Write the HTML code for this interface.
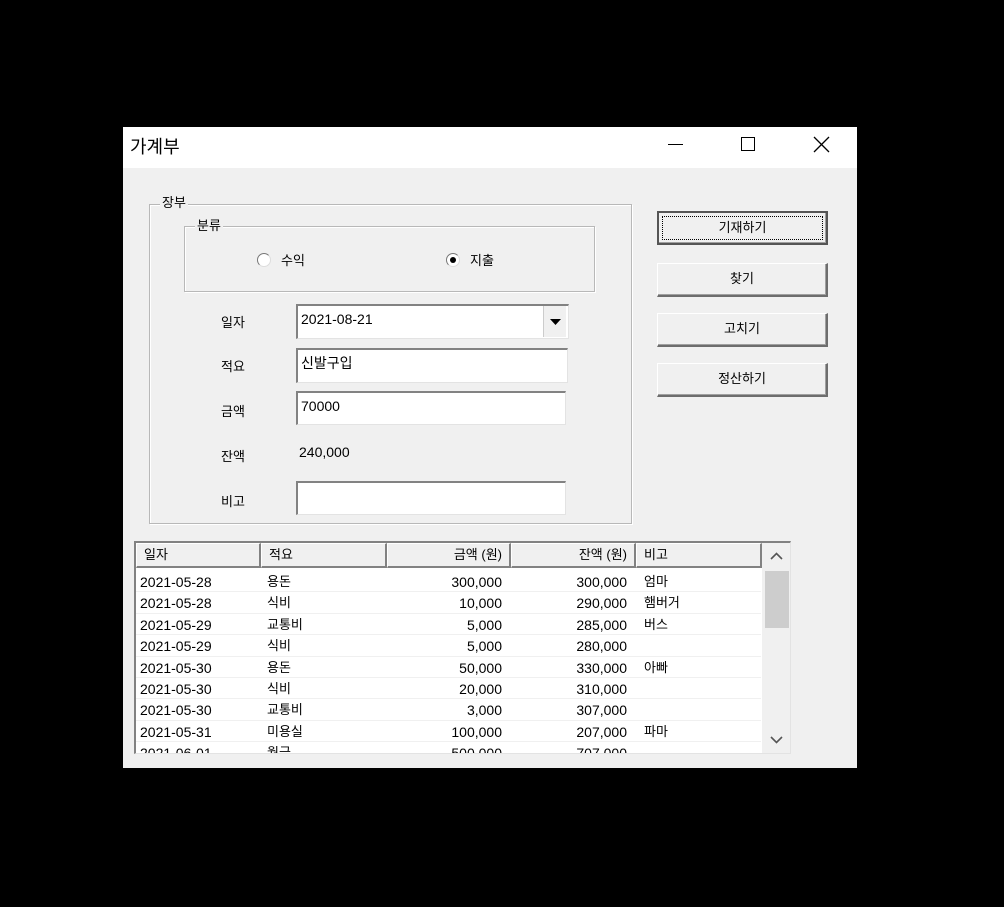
<!DOCTYPE html>
<html><head><meta charset="utf-8"><style>
*{margin:0;padding:0;box-sizing:border-box}
body{width:1004px;height:907px;background:#000;position:relative;overflow:hidden;font-family:"Liberation Sans","Noto Sans CJK KR",sans-serif;font-size:14px;color:#000}
.a{position:absolute}
#win{left:123px;top:127px;width:734px;height:641px;background:#f0f0f0}
#title{left:0;top:0;width:734px;height:41px;background:#fff}
.gb{position:absolute;border:1px solid #b8b8b8;box-shadow:inset 1px 1px 0 #fff,1px 1px 0 #fff}
.gl{position:absolute;background:#f0f0f0;padding:0 2px;font-size:13px;line-height:16px}
.in{position:absolute;background:#fff;border-top:2px solid #828282;border-left:2px solid #828282;border-right:1px solid #e3e3e3;border-bottom:1px solid #e3e3e3;padding:5px 0 0 3px;font-size:14px;line-height:16px}
.lb{position:absolute;font-size:13px}
.btn{position:absolute;left:534px;width:171px;height:34px;background:#f0f0f0;border:1px solid #fff;border-right:2px solid #6d6d6d;border-bottom:2px solid #6d6d6d;box-shadow:inset -1px -1px 0 #a0a0a0;text-align:center;line-height:30px;font-size:13px}
.rd{position:absolute;width:14px;height:14px;border-radius:50%;background:#fff;border:1px solid #777;border-right-color:#ddd;border-bottom-color:#ddd}
#list{left:11px;top:414px;width:657px;height:213px;background:#fff;border-top:2px solid #828282;border-left:2px solid #828282;border-right:1px solid #e3e3e3;border-bottom:1px solid #e3e3e3;overflow:hidden}
.hd{position:absolute;top:0;height:25px;background:#f0f0f0;border-right:2px solid #828282;border-bottom:2px solid #828282;border-top:1px solid #fff;border-left:1px solid #fff;font-size:13px;line-height:22px;padding:0 7px}
.row{position:absolute;left:0;height:21.4px;width:625px;font-size:14px;line-height:22px;border-bottom:1px solid #f0f0f0}
.row span{position:absolute;top:0}
.c1{left:4px}.c2{left:131px;font-size:13px}.c3{right:259px}.c4{right:134px}.c5{left:508px;font-size:13px}
</style></head><body>
<div id="win" class="a">
 <div id="title" class="a"><span class="a" style="left:7px;top:6px;font-size:18px">가계부</span>
  <div class="a" style="left:545px;top:17px;width:15px;height:1px;background:#000"></div>
  <div class="a" style="left:618px;top:10px;width:14px;height:14px;border:1px solid #000"></div>
  <svg class="a" style="left:690px;top:9px" width="17" height="17"><path d="M1 1L16 16M16 1L1 16" stroke="#000" stroke-width="1.3"/></svg>
 </div>
 <div class="gb" style="left:26px;top:77px;width:483px;height:320px"></div>
 <div class="gl" style="left:37px;top:68px">장부</div>
 <div class="gb" style="left:61px;top:99px;width:411px;height:66px"></div>
 <div class="gl" style="left:72px;top:91px">분류</div>
 <div class="rd" style="left:134px;top:126px"></div><span class="lb" style="left:158px;top:123px">수익</span>
 <div class="rd" style="left:323px;top:126px"><div class="a" style="left:3px;top:3px;width:6px;height:6px;border-radius:50%;background:#000"></div></div><span class="lb" style="left:347px;top:123px">지출</span>
 <span class="lb" style="left:98px;top:185px">일자</span>
 <div class="in" style="left:173px;top:177px;width:273px;height:35px">2021-08-21
  <div class="a" style="left:245px;top:0;width:23px;height:31px;background:#f0f0f0;border-left:1px solid #ccc"><svg class="a" style="left:6px;top:13px" width="11" height="6"><path d="M0 0H11L5.5 6Z" fill="#000"/></svg></div></div>
 <span class="lb" style="left:98px;top:229px">적요</span>
 <div class="in" style="left:173px;top:221px;width:272px;height:35px">신발구입</div>
 <span class="lb" style="left:98px;top:274px">금액</span>
 <div class="in" style="left:173px;top:264px;width:270px;height:34px">70000</div>
 <span class="lb" style="left:98px;top:319px">잔액</span>
 <span class="a" style="left:176px;top:317px;font-size:14px">240,000</span>
 <span class="lb" style="left:98px;top:364px">비고</span>
 <div class="in" style="left:173px;top:354px;width:270px;height:34px"></div>
 <div class="btn" style="top:84px;border:2px solid #555;box-shadow:inset -1px -1px 0 #a0a0a0"><div class="a" style="left:3px;top:3px;right:3px;bottom:3px;border:1px dotted #000"></div>기재하기</div>
 <div class="btn" style="top:136px">찾기</div>
 <div class="btn" style="top:186px">고치기</div>
 <div class="btn" style="top:236px">정산하기</div>
 <div id="list" class="a">
  <div class="hd" style="left:0;width:125px">일자</div>
  <div class="hd" style="left:125px;width:126px">적요</div>
  <div class="hd" style="left:251px;width:124px;text-align:right">금액 (원)</div>
  <div class="hd" style="left:375px;width:125px;text-align:right">잔액 (원)</div>
  <div class="hd" style="left:500px;width:126px">비고</div>
  <div class="a" style="left:626px;top:0;width:30px;height:212px;background:#f0f0f0">
   <svg class="a" style="left:8px;top:9px" width="13" height="8"><path d="M1 7L6.5 1.5L12 7" stroke="#555" stroke-width="1.6" fill="none"/></svg>
   <div class="a" style="left:3px;top:28px;width:24px;height:57px;background:#cdcdcd"></div>
   <svg class="a" style="left:8px;top:193px" width="13" height="8"><path d="M1 1L6.5 6.5L12 1" stroke="#555" stroke-width="1.6" fill="none"/></svg>
  </div>
  <div class="row" style="top:28px"><span class="c1">2021-05-28</span><span class="c2">용돈</span><span class="c3">300,000</span><span class="c4">300,000</span><span class="c5">엄마</span></div>
  <div class="row" style="top:49.4px"><span class="c1">2021-05-28</span><span class="c2">식비</span><span class="c3">10,000</span><span class="c4">290,000</span><span class="c5">햄버거</span></div>
  <div class="row" style="top:70.8px"><span class="c1">2021-05-29</span><span class="c2">교통비</span><span class="c3">5,000</span><span class="c4">285,000</span><span class="c5">버스</span></div>
  <div class="row" style="top:92.2px"><span class="c1">2021-05-29</span><span class="c2">식비</span><span class="c3">5,000</span><span class="c4">280,000</span><span class="c5"></span></div>
  <div class="row" style="top:113.6px"><span class="c1">2021-05-30</span><span class="c2">용돈</span><span class="c3">50,000</span><span class="c4">330,000</span><span class="c5">아빠</span></div>
  <div class="row" style="top:135px"><span class="c1">2021-05-30</span><span class="c2">식비</span><span class="c3">20,000</span><span class="c4">310,000</span><span class="c5"></span></div>
  <div class="row" style="top:156.4px"><span class="c1">2021-05-30</span><span class="c2">교통비</span><span class="c3">3,000</span><span class="c4">307,000</span><span class="c5"></span></div>
  <div class="row" style="top:177.8px"><span class="c1">2021-05-31</span><span class="c2">미용실</span><span class="c3">100,000</span><span class="c4">207,000</span><span class="c5">파마</span></div>
  <div class="row" style="top:199.2px"><span class="c1">2021-06-01</span><span class="c2">월급</span><span class="c3">500,000</span><span class="c4">707,000</span><span class="c5"></span></div>
 </div>
</div>
</body></html>
